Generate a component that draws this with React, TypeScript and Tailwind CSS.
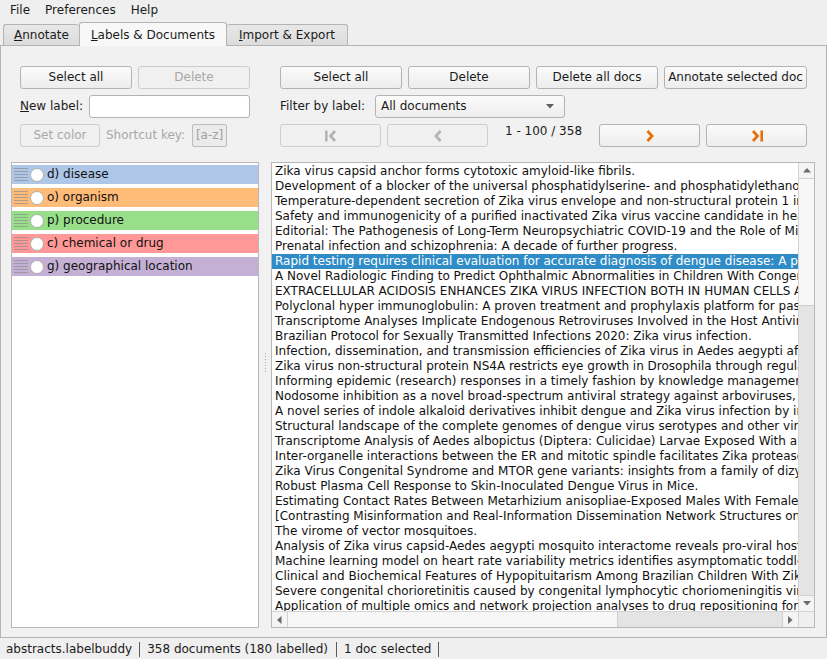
import React from 'react';

const titles = [
  'Zika virus capsid anchor forms cytotoxic amyloid-like fibrils.',
  'Development of a blocker of the universal phosphatidylserine- and phosphatidylethanolamine-dependent viral entry pathways.',
  'Temperature-dependent secretion of Zika virus envelope and non-structural protein 1 in mosquito cells.',
  'Safety and immunogenicity of a purified inactivated Zika virus vaccine candidate in healthy adults.',
  'Editorial: The Pathogenesis of Long-Term Neuropsychiatric COVID-19 and the Role of Microglia, Mitochondria, and Persistent Neuroinflammation.',
  'Prenatal infection and schizophrenia: A decade of further progress.',
  'Rapid testing requires clinical evaluation for accurate diagnosis of dengue disease: A passive surveillance study.',
  'A Novel Radiologic Finding to Predict Ophthalmic Abnormalities in Children With Congenital Zika Syndrome.',
  'EXTRACELLULAR ACIDOSIS ENHANCES ZIKA VIRUS INFECTION BOTH IN HUMAN CELLS AND EX-VIVO PLACENTAL EXPLANTS.',
  'Polyclonal hyper immunoglobulin: A proven treatment and prophylaxis platform for passive immunization.',
  'Transcriptome Analyses Implicate Endogenous Retroviruses Involved in the Host Antiviral Immune System.',
  'Brazilian Protocol for Sexually Transmitted Infections 2020: Zika virus infection.',
  'Infection, dissemination, and transmission efficiencies of Zika virus in Aedes aegypti after serial passage.',
  'Zika virus non-structural protein NS4A restricts eye growth in Drosophila through regulation of JAK/STAT signaling.',
  'Informing epidemic (research) responses in a timely fashion by knowledge management.',
  'Nodosome inhibition as a novel broad-spectrum antiviral strategy against arboviruses, enteroviruses, and SARS-CoV-2.',
  'A novel series of indole alkaloid derivatives inhibit dengue and Zika virus infection by interference with the viral replication complex.',
  'Structural landscape of the complete genomes of dengue virus serotypes and other viral hemorrhagic fevers.',
  'Transcriptome Analysis of Aedes albopictus (Diptera: Culicidae) Larvae Exposed With a Photosensitizer.',
  'Inter-organelle interactions between the ER and mitotic spindle facilitates Zika protease cleavage.',
  'Zika Virus Congenital Syndrome and MTOR gene variants: insights from a family of dizygotic twins.',
  'Robust Plasma Cell Response to Skin-Inoculated Dengue Virus in Mice.',
  'Estimating Contact Rates Between Metarhizium anisopliae-Exposed Males With Female Aedes aegypti.',
  '[Contrasting Misinformation and Real-Information Dissemination Network Structures on Social Media].',
  'The virome of vector mosquitoes.',
  'Analysis of Zika virus capsid-Aedes aegypti mosquito interactome reveals pro-viral host factors critical for establishing infection.',
  'Machine learning model on heart rate variability metrics identifies asymptomatic toddlers exposed to Zika virus.',
  'Clinical and Biochemical Features of Hypopituitarism Among Brazilian Children With Zika Virus-Induced Microcephaly.',
  'Severe congenital chorioretinitis caused by congenital lymphocytic choriomeningitis virus infection.',
  'Application of multiple omics and network projection analyses to drug repositioning for pathogenic mosquito-borne viruses.',
];

const labels = [
  { text: 'd) disease', color: 'bg-[#aec7e8]' },
  { text: 'o) organism', color: 'bg-[#ffbb78]' },
  { text: 'p) procedure', color: 'bg-[#98df8a]' },
  { text: 'c) chemical or drug', color: 'bg-[#ff9896]' },
  { text: 'g) geographical location', color: 'bg-[#c5b0d5]' },
];

function Btn({ children, w, disabled }: { children: React.ReactNode; w: string; disabled?: boolean }) {
  return (
    <div
      className={`${w} shrink-0 h-[23px] flex items-center justify-center rounded-[3px] border whitespace-nowrap ${
        disabled
          ? 'border-[#cdcdcd] bg-[#f0f0f0] text-[#a8a8a8]'
          : 'border-[#b3b3b3] bg-gradient-to-b from-[#fbfbfb] to-[#ededed] text-[#1b1b1b]'
      }`}
    >
      {children}
    </div>
  );
}

function Chevron({ dir, bar, color }: { dir: 'l' | 'r'; bar?: boolean; color: string }) {
  return (
    <svg width="16" height="16" viewBox="0 0 16 16">
      {dir === 'l' ? (
        <>
          {bar && <rect x="2" y="2.5" width="2.6" height="11" fill={color} />}
          <path d={bar ? 'M12 3 L7.5 8 L12 13' : 'M10.5 3 L6 8 L10.5 13'} fill="none" stroke={color} strokeWidth="2.8" />
        </>
      ) : (
        <>
          <path d={bar ? 'M4 3 L8.5 8 L4 13' : 'M5.5 3 L10 8 L5.5 13'} fill="none" stroke={color} strokeWidth="2.8" />
          {bar && <rect x="11.4" y="2.5" width="2.6" height="11" fill={color} />}
        </>
      )}
    </svg>
  );
}

function Handle() {
  return (
    <div className="w-[14px] flex flex-col gap-[2px] ml-[2px]">
      {[0, 1, 2, 3, 4].map(i => (
        <div key={i} className="h-px bg-[#8f8f8f] opacity-70" />
      ))}
    </div>
  );
}

export default function App() {
  return (
    <div
      className="w-[827px] h-[659px] bg-[#efefef] text-[12px] leading-[15px] text-[#1b1b1b] flex flex-col overflow-hidden"
      style={{ fontFamily: '"DejaVu Sans", sans-serif' }}
    >
      {/* menu bar */}
      <div className="h-[21px] flex items-center pl-[3px]">
        <span className="px-[7px]">File</span>
        <span className="px-[8px]">Preferences</span>
        <span className="px-[7px]">Help</span>
      </div>

      {/* tabs */}
      <div className="h-[24px] flex items-end pl-[3px] relative z-10">
        <div className="h-[21px] px-[10px] flex items-center border border-b-0 border-r-0 border-[#b4b4b4] rounded-t-[3px] bg-gradient-to-b from-[#e8e8e8] to-[#dcdcdc]">
          <span><u>A</u>nnotate</span>
        </div>
        <div className="h-[24px] px-[11px] flex items-center border border-b-0 border-[#b4b4b4] rounded-t-[3px] bg-[#f8f8f8] -mb-px pt-[2px]">
          <span><u>L</u>abels &amp; Documents</span>
        </div>
        <div className="h-[21px] px-[12px] flex items-center border border-b-0 border-l-0 border-[#b4b4b4] rounded-t-[3px] bg-gradient-to-b from-[#e8e8e8] to-[#dcdcdc]">
          <span><u>I</u>mport &amp; Export</span>
        </div>
      </div>

      {/* pane */}
      <div className="h-[593px] border border-[#b4b4b4] bg-[#f1f1f1] flex pl-[10px] pr-[11px] pt-[20px] pb-[9px]">
        {/* left column */}
        <div className="w-[248px] flex flex-col">
          <div className="px-[9px] flex flex-col gap-[6px]">
            <div className="flex gap-[6px]">
              <Btn w="w-[112px]">Select all</Btn>
              <Btn w="w-[112px]" disabled>Delete</Btn>
            </div>
            <div className="flex items-center h-[23px]">
              <span className="w-[69px]"><u>N</u>ew label:</span>
              <div className="w-[161px] h-[23px] bg-white border border-[#b3b3b3] rounded-[3px]" />
            </div>
            <div className="flex items-center h-[23px]">
              <Btn w="w-[80px]" disabled>Set color</Btn>
              <span className="ml-[6px] text-[#a8a8a8]">Shortcut key:</span>
              <div className="ml-[7px] w-[35px] h-[23px] flex items-center justify-center border border-[#bcbcbc] bg-[#ebebeb] rounded-[2px] text-[#a0a0a0]">
                [a-z]
              </div>
            </div>
          </div>
          <div className="mt-[15px] flex-1 bg-white border border-[#b8b8b8] pt-[2px] flex flex-col gap-[4px]">
            {labels.map(l => (
              <div key={l.text} className={`h-[19px] flex items-center ${l.color}`}>
                <Handle />
                <div className="ml-[2px] w-[14px] h-[14px] rounded-full bg-white border border-[#b0b0b0]" />
                <span className="ml-[3px] text-[#111]">{l.text}</span>
              </div>
            ))}
          </div>
        </div>

        {/* splitter */}
        <div className="w-[12px] flex items-center justify-center">
          <div className="flex flex-col gap-[2px] mt-[30px]">
            {[0, 1, 2, 3, 4, 5, 6].map(i => (
              <div key={i} className="w-px h-px bg-[#a8a8a8]" />
            ))}
          </div>
        </div>

        {/* right column */}
        <div className="w-[544px] flex flex-col">
          <div className="pl-[9px] pr-[8px] flex flex-col gap-[6px]">
            <div className="flex gap-[6px]">
              <Btn w="w-[122px]">Select all</Btn>
              <Btn w="w-[122px]">Delete</Btn>
              <Btn w="w-[122px]">Delete all docs</Btn>
              <Btn w="w-[143px]">Annotate selected doc</Btn>
            </div>
            <div className="flex items-center h-[23px]">
              <span className="w-[95px]">Filter by label:</span>
              <div className="w-[190px] h-[23px] flex items-center justify-between pl-[5px] pr-[10px] border border-[#b3b3b3] rounded-[3px] bg-gradient-to-b from-[#fbfbfb] to-[#ededed]">
                <span>All documents</span>
                <svg width="8" height="5" viewBox="0 0 8 5">
                  <path d="M0 0 L8 0 L4 4.5 Z" fill="#606060" />
                </svg>
              </div>
            </div>
            <div className="flex gap-[6px] h-[23px]">
              <Btn w="w-[101px]" disabled>
                <Chevron dir="l" bar color="#b4b4b4" />
              </Btn>
              <Btn w="w-[101px]" disabled>
                <Chevron dir="l" color="#b4b4b4" />
              </Btn>
              <div className="w-[99px] shrink-0 text-center">1 - 100 / 358</div>
              <Btn w="w-[101px]">
                <Chevron dir="r" color="#e8700a" />
              </Btn>
              <Btn w="w-[101px]">
                <Chevron dir="r" bar color="#e8700a" />
              </Btn>
            </div>
          </div>

          {/* document list */}
          <div className="mt-[15px] flex-1 bg-white border border-[#b8b8b8] flex flex-col min-h-0">
            <div className="flex flex-1 min-h-0">
              <div className="flex-1 overflow-hidden pt-px">
                {titles.map((t, i) => (
                  <div
                    key={i}
                    className={`h-[15px] pl-[3px] whitespace-nowrap ${
                      i === 6 ? 'bg-[#308cc6] text-white' : 'text-[#111]'
                    }`}
                  >
                    {t}
                  </div>
                ))}
              </div>
              {/* vertical scrollbar */}
              <div className="w-[16px] flex flex-col border-l border-[#d4d4d4] bg-[#e4e4e4]">
                <div className="h-[16px] bg-[#f4f4f4] border-b border-[#d0d0d0] flex items-center justify-center">
                  <svg width="8" height="5" viewBox="0 0 8 5"><path d="M0 4.5 L8 4.5 L4 0 Z" fill="#6a6a6a" /></svg>
                </div>
                <div className="h-[127px] bg-[#f7f7f7] border-b border-[#cfcfcf]" />
                <div className="flex-1" />
                <div className="h-[16px] bg-[#f4f4f4] border-t border-[#d0d0d0] flex items-center justify-center">
                  <svg width="8" height="5" viewBox="0 0 8 5"><path d="M0 0 L8 0 L4 4.5 Z" fill="#6a6a6a" /></svg>
                </div>
              </div>
            </div>
            {/* horizontal scrollbar */}
            <div className="h-[16px] flex border-t border-[#d4d4d4]">
              <div className="flex-1 flex bg-[#e4e4e4]">
                <div className="w-[16px] bg-[#f4f4f4] border-r border-[#d0d0d0] flex items-center justify-center">
                  <svg width="5" height="8" viewBox="0 0 5 8"><path d="M4.5 0 L4.5 8 L0 4 Z" fill="#6a6a6a" /></svg>
                </div>
                <div className="w-[330px] bg-[#f7f7f7] border-r border-[#cfcfcf]" />
                <div className="flex-1" />
                <div className="w-[16px] bg-[#f4f4f4] border-l border-[#d0d0d0] flex items-center justify-center">
                  <svg width="5" height="8" viewBox="0 0 5 8"><path d="M0 0 L0 8 L4.5 4 Z" fill="#6a6a6a" /></svg>
                </div>
              </div>
              <div className="w-[16px] bg-[#efefef] border-l border-[#d4d4d4]" />
            </div>
          </div>
        </div>
      </div>

      {/* status bar */}
      <div className="flex-1 flex items-center pt-[2px]">
        <span className="ml-[6px] pr-[7px] border-r border-[#5a5a5a]">abstracts.labelbuddy</span>
        <span className="ml-[7px] pr-[8px] border-r border-[#5a5a5a]">358 documents (180 labelled)</span>
        <span className="ml-[7px] pr-[7px] border-r border-[#5a5a5a]">1 doc selected</span>
      </div>
    </div>
  );
}
